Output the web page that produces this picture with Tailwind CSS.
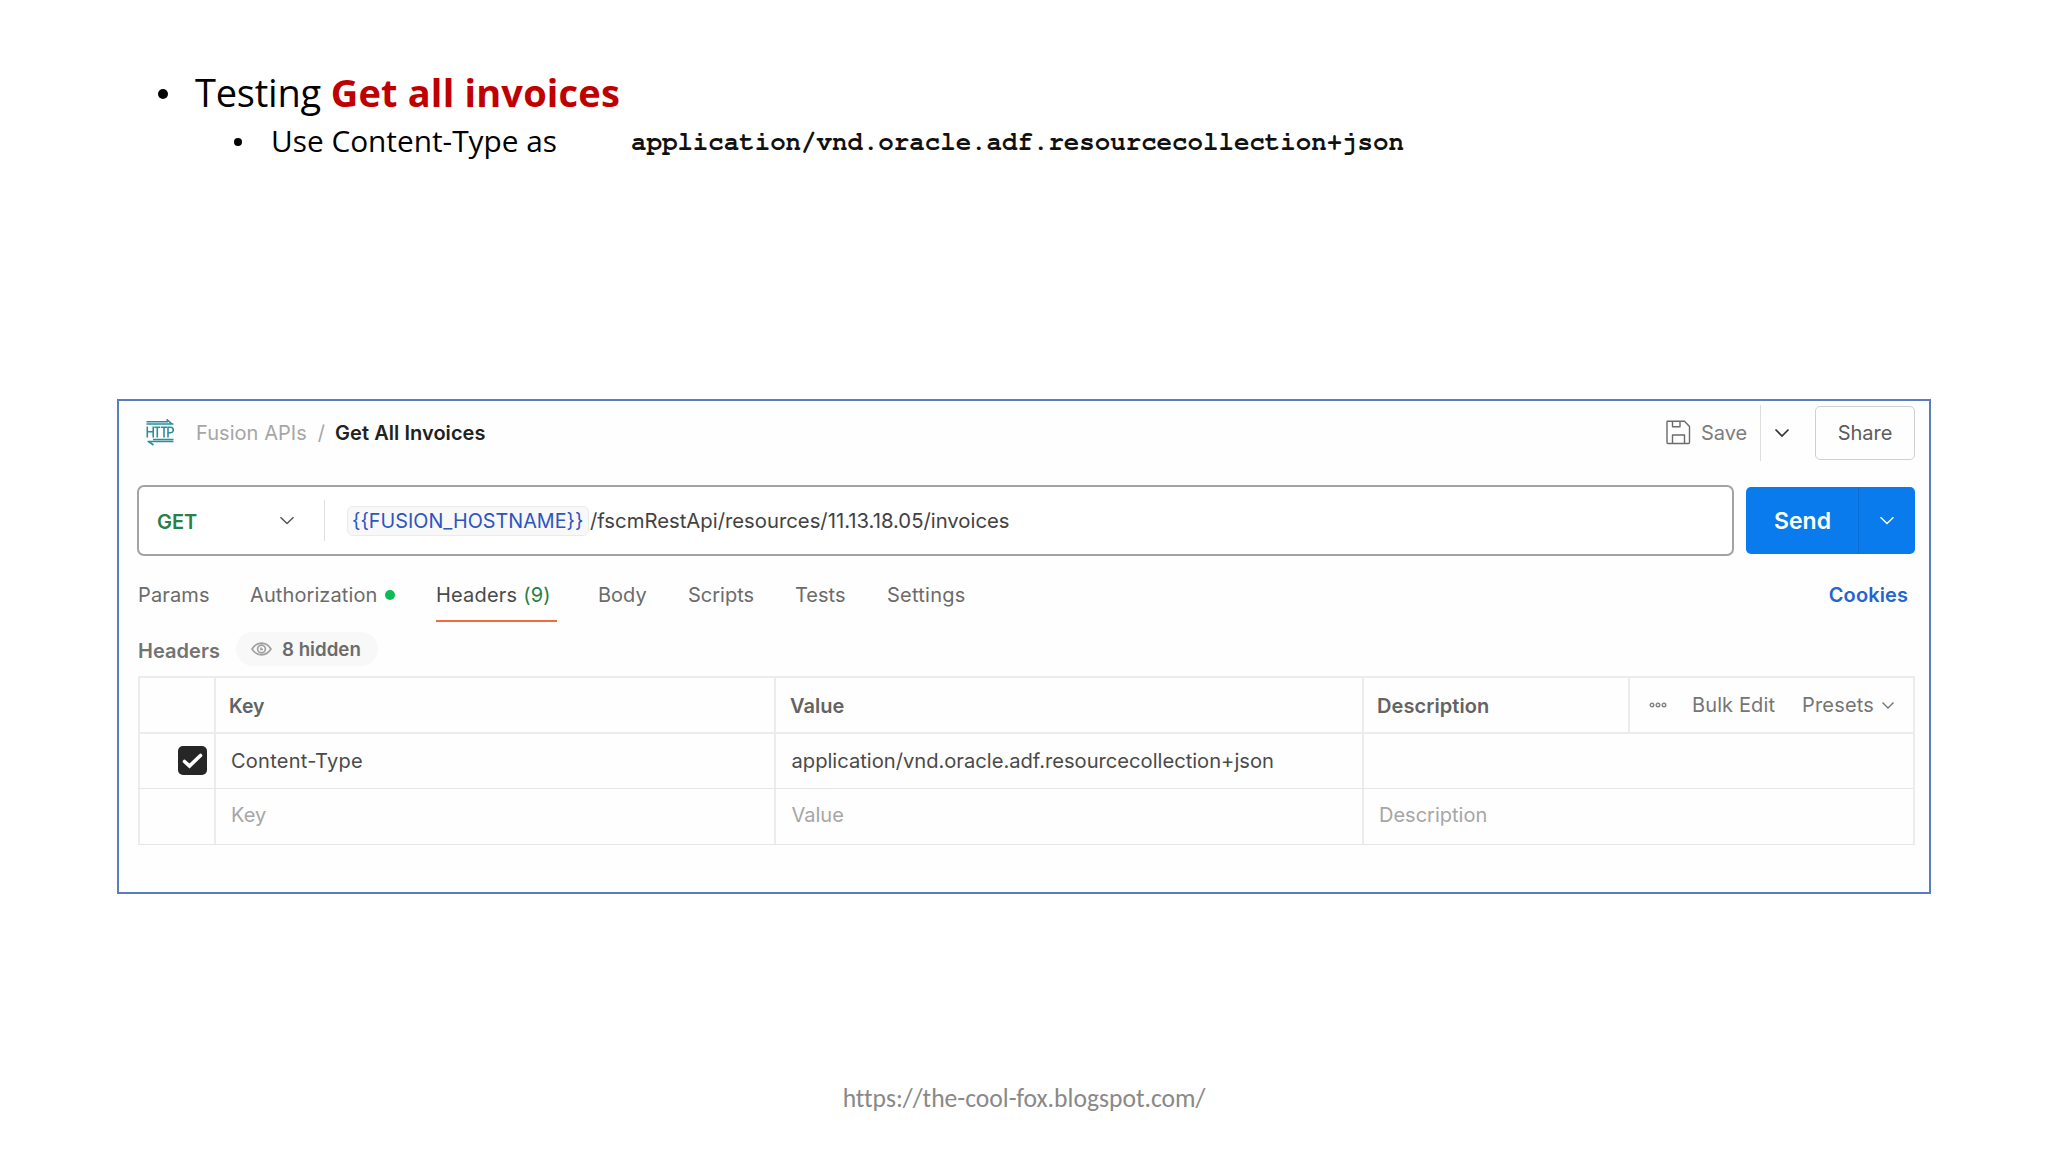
<!DOCTYPE html>
<html lang="en">
<head>
<meta charset="utf-8">
<title>Testing Get all invoices</title>
<script src="https://cdn.jsdelivr.net/npm/@tailwindcss/browser@4"></script>
</head>
<body class="w-[2048px] h-[1152px] overflow-hidden bg-white flex flex-col whitespace-nowrap">

  <!-- Slide text -->
  <header class="h-[399px] pt-[67px] font-['Open_Sans','Noto_Sans',sans-serif] text-black shrink-0">
    <div class="flex items-center h-[50px] pl-[158px]">
      <span class="size-[10px] rounded-full bg-black mt-[3px]"></span>
      <h1 class="ml-[27px] text-[38px] leading-[50px] tracking-[-0.2px]">Testing <span class="font-bold text-[#c00000] tracking-[0.17px]">Get all invoices</span></h1>
    </div>
    <div class="flex items-center h-[42px] mt-[3px] pl-[234px]">
      <span class="size-[8px] rounded-full bg-black mt-[2px]"></span>
      <p class="ml-[29px] w-[360px] text-[29.8px] leading-[42px]">Use Content-Type as</p>
      <code class="pt-[2px] font-bold text-[25.77px] text-[#111] font-[FreeMono,'Courier_New','Liberation_Mono',monospace]">application/vnd.oracle.adf.resourcecollection+json</code>
    </div>
  </header>

  <!-- API client panel -->
  <main class="ml-[117px] w-[1814px] h-[495px] shrink-0 border-2 border-[#5b7dbd] bg-[#fefefe] pl-[18px] pr-[14px] font-[Inter,sans-serif] text-[20px] leading-[24px] text-[#6b6b6b]">

    <div class="flex items-center h-[62px] pt-px pl-[9px]">
      <svg class="w-[28px] h-[27px]" viewBox="0 0 28 27" fill="none" stroke="#2b8f9c" stroke-width="1.6">
        <path d="M0.500 5H27.500M0.500 2.800H22M20.500 0.300l5.500 4.700M27.500 22.500H1.500M27.500 20.500H7M7.500 26l-5-3.500"/>
        <path d="M1.300 7.500v11M7.200 7.500v11M1.300 12.800H7.200M8.300 8.300h6M11.300 8.300v10.200M15 8.300h6M18 8.300v10.200M22 18.500v-10.200h2.600a2.600 2.600 0 0 1 0 5.400h-2.600"/>
      </svg>
      <span class="ml-[22px] tracking-[0.05px] text-[#a6a6a6]">Fusion APIs</span>
      <span class="ml-[11px] text-[#a6a6a6]">/</span>
      <span class="ml-[10px] font-semibold text-[#212121] tracking-[0.05px]">Get All Invoices</span>
      <div class="ml-auto flex items-center">
        <svg class="size-[25px]" viewBox="0 0 25 25" fill="none" stroke="#6b6b6b" stroke-width="1.4" stroke-linejoin="round">
          <path d="M1.500 1.200H18.500L23.500 6.500V22.500a1 1 0 0 1-1 1H2a1 1 0 0 1-1-1V2a.8.8 0 0 1 .5-.8zM6.500 1.200V6.800h7.500V1.200M6.500 23.500V15h12V23.500"/>
        </svg>
        <span class="ml-[10px] w-[59px] text-[#7d7d7d]">Save</span>
        <span class="w-px h-[56px] bg-[#dedede]"></span>
        <svg class="ml-[13px] w-[16px] h-[10px]" viewBox="0 0 16 10" fill="none" stroke="#333" stroke-width="1.7"><path d="M1.500 1.500L8 8l6.500-6.500"/></svg>
        <button class="ml-[25px] w-[100px] h-[54px] rounded-[5px] border-[1.500px] border-[#d0d0d0] text-[#5c5c5c]">Share</button>
      </div>
    </div>

    <div class="mt-[22px] flex items-center h-[71px]">
      <div class="flex items-center w-[1597px] h-[71px] rounded-[7px] border-2 border-[#a3a3a3] bg-white">
        <span class="ml-[18px] w-[122px] pt-[2px] font-semibold text-[20px] text-[#2a7f47]">GET</span>
        <svg class="w-[16px] h-[9px]" viewBox="0 0 16 9" fill="none" stroke="#555" stroke-width="1.500"><path d="M1.500 1.200L8 7.500l6.500-6.300"/></svg>
        <span class="ml-[29px] w-px h-[41px] bg-[#dedede]"></span>
        <span class="ml-[22px] w-[242px] h-[30px] rounded-[6px] border border-[#ebebeb] bg-[#f8f8f8] pl-[4px] text-[19.8px] leading-[28px] text-[#2c55c0]">{{FUSION_HOSTNAME}}</span>
        <span class="ml-[1px] text-[20.300px] text-[#424242]">/fscmRestApi/resources/11.13.18.05/invoices</span>
      </div>
      <button class="ml-[12px] flex items-center h-[67px] w-[169px] rounded-[5px] overflow-hidden bg-[#097bed] text-white">
        <span class="w-[112px] pl-px text-center text-[23px] font-semibold">Send</span>
        <span class="flex items-center justify-center w-[57px] h-full border-l border-[#0a6fd6]">
          <svg class="w-[16px] h-[9px]" viewBox="0 0 16 9" fill="none" stroke="#fff" stroke-width="1.500"><path d="M1.500 1.200L8 7.500l6.500-6.300"/></svg>
        </span>
      </button>
    </div>

    <nav class="mt-[17px] flex h-[49px] leading-[44px] pl-px">
      <span class="w-[112px] tracking-[0.15px]">Params</span>
      <span class="flex w-[186px] items-start tracking-[0.1px]">Authorization<i class="ml-[8px] mt-[17px] size-[10px] rounded-full bg-[#0cbb52]"></i></span>
      <span class="w-[121px] h-[49px] border-b-2 border-[#f26b3f] text-[#4a4a4a] tracking-[0.2px]">Headers <span class="text-[#2a7f47]">(9)</span></span>
      <span class="ml-[41px] w-[90px]">Body</span>
      <span class="w-[107px]">Scripts</span>
      <span class="w-[92px]">Tests</span>
      <span class="tracking-[0.25px]">Settings</span>
      <span class="ml-auto pr-[7px] font-semibold text-[#2465cf] tracking-[0.1px]">Cookies</span>
    </nav>

    <div class="mt-[10px] flex items-center h-[34px] pl-px font-semibold">
      <span class="w-[98px] pt-[3px] tracking-[0.05px] text-[#737373]">Headers</span>
      <span class="flex items-center h-[34px] w-[142px] rounded-full bg-[#f8f8f8] pl-[15px]">
        <svg class="w-[21px] h-[14px]" viewBox="0 0 21 14" fill="none" stroke="#a0a0a0" stroke-width="1.700"><path d="M1 7C4 2.500 7 1.200 10.500 1.200S17 2.500 20 7c-3 4.500-6 5.800-9.500 5.800S4 11.500 1 7z"/><circle cx="10.500" cy="7" r="3.900"/><path d="M10 5.500v2h2"/></svg>
        <span class="ml-[10px] text-[18.700px] pt-px">8 hidden</span>
      </span>
    </div>

    <!-- Header table -->
    <section class="mt-[10px] ml-[1px] w-[1777px] border-t-2 border-r-2 border-[#ececec] text-[#a6a6a6]">
      <div class="grid grid-cols-[76px_560px_588px_266px_1fr] grid-rows-[54px] h-[56px] border-b-2 border-[#ececec] leading-[54px] font-semibold text-[#636363] *:border-l-2 *:border-[#ececec]">
        <span></span>
        <span class="pl-[13px] pt-px text-[19.500px]">Key</span>
        <span class="pl-[14px] pt-px">Value</span>
        <span class="pl-[13px] pt-px tracking-[0.08px]">Description</span>
        <span class="flex items-center pl-[19px] leading-[24px] font-normal text-[#757575]">
          <svg class="w-[18px] h-[6px]" viewBox="0 0 18 6" fill="none" stroke="#858585" stroke-width="1.400"><circle cx="3" cy="3" r="1.800"/><circle cx="9" cy="3" r="1.800"/><circle cx="15" cy="3" r="1.800"/></svg>
          <span class="ml-[25px] w-[110px] tracking-[0.12px]">Bulk Edit</span>
          <span class="w-[79px] tracking-[0.18px]">Presets</span>
          <svg class="w-[14px] h-[9px]" viewBox="0 0 14 9" fill="none" stroke="#757575" stroke-width="1.400"><path d="M1.500 1.500L7 7l5.500-5.500"/></svg>
        </span>
      </div>
      <div class="grid grid-cols-[76px_560px_588px_1fr] grid-rows-[54px] h-[55px] border-b border-[#e6e6e6] leading-[54px] text-[#4a4a4a] *:border-l-2 *:border-[#ececec]">
        <span class="flex items-center pl-[38px] pb-px">
          <svg class="size-[29px]" viewBox="0 0 29 29"><rect width="29" height="29" rx="5" fill="#262626"/><path d="M6.500 15.500l5 4.500L22.500 9.500" fill="none" stroke="#fff" stroke-width="3.600" stroke-linecap="round"/></svg>
        </span>
        <span class="pl-[15px] tracking-[0.250px]">Content-Type</span>
        <span class="pl-[15.500px] text-[20.150px]">application/vnd.oracle.adf.resourcecollection+json</span>
        <span></span>
      </div>
      <div class="grid grid-cols-[76px_560px_588px_1fr] h-[56px] border-b border-[#e6e6e6] leading-[53px] *:border-l-2 *:border-[#ececec]">
        <span></span>
        <span class="pl-[15px]">Key</span>
        <span class="pl-[15.500px]">Value</span>
        <span class="pl-[15px]">Description</span>
      </div>
    </section>
  </main>

  <footer class="mt-[189px] text-center font-[Carlito,Lato,sans-serif] text-[25.600px] leading-[32px] text-[#898989] [font-variant-ligatures:none]">https://the-cool-fox.blogspot.com/</footer>
</body>
</html>
